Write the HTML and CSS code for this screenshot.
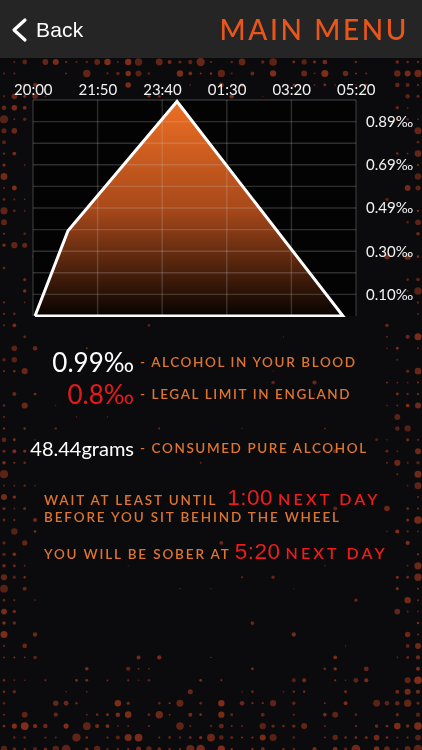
FILE: index.html
```html
<!DOCTYPE html>
<html lang="en">
<head>
<meta charset="utf-8">
<title>Main Menu</title>
<link rel="stylesheet" href="styles.css">
</head>
<body>
<canvas id="dots" class="dots" width="422" height="750"></canvas>
<div class="app">
  <header class="nav">
    <div class="back">
      <svg class="chev" width="18" height="26" viewBox="0 0 18 26"><path d="M15 3 L4 13 L15 23" fill="none" stroke="#fff" stroke-width="3.2" stroke-linecap="round" stroke-linejoin="round"/></svg>
      <span class="back-text">Back</span>
    </div>
    <div class="title">MAIN MENU</div>
  </header>

  <section class="chart-block">
    <div class="times">
      <span>20:00</span><span>21:50</span><span>23:40</span><span>01:30</span><span>03:20</span><span>05:20</span>
    </div>
    <div class="chart-row">
      <svg class="chart" width="325" height="218" viewBox="-1 -1 325 218">
        <defs>
          <linearGradient id="fillg" x1="0" y1="0" x2="0" y2="216" gradientUnits="userSpaceOnUse">
            <stop offset="0" stop-color="#ee7024"/>
            <stop offset="0.5" stop-color="#a9491a"/>
            <stop offset="1" stop-color="#070301"/>
          </linearGradient>
        </defs>
        <rect x="0" y="0" width="323" height="216" fill="#030303"/>
        <polygon points="2,216 35,130.7 144,1.5 310,216" fill="url(#fillg)"/>
        <g stroke="rgba(200,200,200,0.22)" stroke-width="1.4">
          <line x1="0" y1="0" x2="0" y2="216"/>
          <line x1="64.6" y1="0" x2="64.6" y2="216"/>
          <line x1="129.2" y1="0" x2="129.2" y2="216"/>
          <line x1="193.8" y1="0" x2="193.8" y2="216"/>
          <line x1="258.4" y1="0" x2="258.4" y2="216"/>
          <line x1="323" y1="0" x2="323" y2="216"/>
          <line x1="0" y1="0" x2="323" y2="0"/>
          <line x1="0" y1="21.6" x2="323" y2="21.6"/>
          <line x1="0" y1="43.2" x2="323" y2="43.2"/>
          <line x1="0" y1="64.8" x2="323" y2="64.8"/>
          <line x1="0" y1="86.4" x2="323" y2="86.4"/>
          <line x1="0" y1="108" x2="323" y2="108"/>
          <line x1="0" y1="129.6" x2="323" y2="129.6"/>
          <line x1="0" y1="151.2" x2="323" y2="151.2"/>
          <line x1="0" y1="172.8" x2="323" y2="172.8"/>
          <line x1="0" y1="194.4" x2="323" y2="194.4"/>
        </g>
        <polyline points="2,216 35,130.7 144,1.5 310,216 2,216" fill="none" stroke="#fff" stroke-width="3" stroke-linejoin="miter"/>
      </svg>
      <div class="ylabels">
        <span>0.89‰</span><span>0.69‰</span><span>0.49‰</span><span>0.30‰</span><span>0.10‰</span>
      </div>
    </div>
  </section>

  <section class="stats">
    <div class="stat r1"><span class="num white">0.99‰</span><span class="lbl">- Alcohol in your blood</span></div>
    <div class="stat r2"><span class="num red">0.8‰</span><span class="lbl">- Legal limit in England</span></div>
    <div class="stat r3"><span class="num grams">48.44grams</span><span class="lbl">- Consumed pure alcohol</span></div>
  </section>

  <section class="advice">
    <div class="line l1"><span class="lbl">Wait at least until</span><span class="time t1">1:00</span><span class="next">Next day</span></div>
    <div class="line l2"><span class="lbl">Before you sit behind the wheel</span></div>
    <div class="line l3"><span class="lbl">You will be sober at</span><span class="time t2">5:20</span><span class="next">Next day</span></div>
  </section>
</div>
<script src="script.js"></script>
</body>
</html>
```

FILE: styles.css
```css
html, body {
  margin: 0;
  padding: 0;
}
body {
  background: #0b0b0d;
  width: 422px;
  height: 750px;
  overflow: hidden;
  font-family: Lato, "Open Sans", sans-serif;
  color: #fff;
}
.dots {
  position: fixed;
  top: 0;
  left: 0;
  width: 422px;
  height: 750px;
  z-index: 0;
}
.app {
  position: relative;
  z-index: 1;
}
.nav {
  height: 58px;
  background: #252525;
  display: flex;
  align-items: center;
  justify-content: space-between;
  padding: 0 13px 0 10px;
}
.back {
  display: flex;
  align-items: center;
  gap: 8px;
  margin-top: 2px;
}
.chev {
  display: block;
}
.back-text {
  font-family: "Liberation Sans", Arial, sans-serif;
  font-size: 21px;
  color: #fff;
  letter-spacing: 0.2px;
}
.title {
  font-family: Lato, sans-serif;
  font-size: 28px;
  font-weight: 500;
  letter-spacing: 2.6px;
  color: #e9561b;
  margin-top: -1px;
}
.chart-block {
  margin-top: 20px;
}
.times {
  display: flex;
  height: 22px;
  line-height: 22px;
  padding-left: 1px;
  font-size: 15px;
  color: #f2f2f2;
}
.times span {
  width: 64.6px;
  flex: none;
  text-align: center;
}
.chart-row {
  display: flex;
  margin-top: -1px;
  padding-left: 32px;
}
.chart {
  display: block;
  flex: none;
}
.ylabels {
  display: flex;
  flex-direction: column;
  margin-left: 9px;
  padding-top: 1px;
  font-size: 15px;
  color: #f2f2f2;
}
.ylabels span {
  height: 43.2px;
  line-height: 43.2px;
}
.stats {
  margin-top: 29px;
}
.stat {
  display: grid;
  grid-template-columns: 134px auto;
  column-gap: 6px;
  align-items: center;
}
.r1, .r2 {
  height: 32px;
}
.r3 {
  height: 28px;
  margin-top: 24px;
}
.num {
  text-align: right;
  font-size: 26px;
  line-height: 32px;
}
.white { color: #fff; }
.red { color: #e61a1a; }
.grams {
  font-size: 20px;
  line-height: 28px;
  color: #fff;
}
.lbl {
  text-transform: uppercase;
  font-size: 13.5px;
  font-weight: 600;
  letter-spacing: 1.6px;
  color: #dd7530;
  white-space: nowrap;
}
.advice {
  margin-top: 23px;
  padding-left: 44px;
}
.advice .lbl {
  letter-spacing: 1.85px;
}
.line {
  display: flex;
  align-items: baseline;
}
.l1 { height: 24px; }
.l2 { height: 22px; }
.l3 { height: 24px; margin-top: 8px; }
.time {
  font-family: "Liberation Sans", Arial, sans-serif;
  font-size: 22.5px;
  color: #ee1c1c;
  letter-spacing: 0.5px;
}
.t1 { margin-left: 10px; }
.t2 { margin-left: 4px; }
.next {
  margin-left: 5px;
  text-transform: uppercase;
  font-size: 16px;
  font-weight: 600;
  letter-spacing: 3.2px;
  color: #ee1c1c;
}
```

FILE: script.js
```js
(function () {
  var c = document.getElementById('dots');
  var W = 422;
  var ctx = c.getContext('2d');
  var s = 98765;
  function rnd() {
    s = (s * 1103515245 + 12345) & 0x7fffffff;
    return s / 0x7fffffff;
  }
  for (var row = 0; row < 62; row++) {
    var y = 62 + row * 11.45;
    for (var col = 0; col < 41; col++) {
      var x = 4 + col * 10.35;
      var p = Math.max(
        1 - x / 42,
        1 - (W - x) / 46,
        (y - 640) / 105,
        1 - (y - 58) / 48
      );
      p = Math.min(1, Math.max(0, p));
      var r = rnd();
      var sz = rnd();
      var a = rnd();
      if (r > p * 0.85 + 0.03) continue;
      var rad = (1.0 + sz * sz * 3.2) * (0.55 + p * 0.5);
      ctx.fillStyle = 'rgba(135,48,26,' + (0.6 + a * 0.35).toFixed(2) + ')';
      ctx.beginPath();
      ctx.arc(x, y, rad, 0, Math.PI * 2);
      ctx.fill();
    }
  }
})();
```
